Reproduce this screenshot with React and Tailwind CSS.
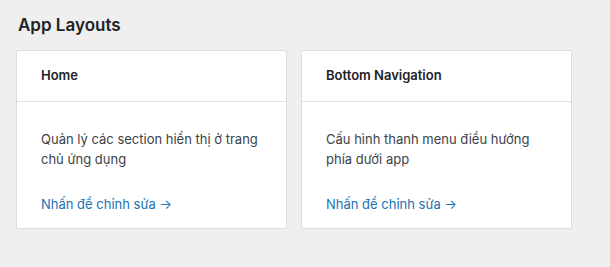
const cards = [
  {
    title: 'Home',
    desc: 'Quản lý các section hiển thị ở trang chủ ứng dụng',
  },
  {
    title: 'Bottom Navigation',
    desc: 'Cấu hình thanh menu điều hướng phía dưới app',
  },
];

const App = () => {
  return (
    <div
      className="bg-[#efefef] min-h-[267px] w-[610px] pl-4 pr-[38px] pt-[13px]"
      style={{ fontFamily: 'Inter, "Noto Sans", sans-serif' }}
    >
      <h1 className="text-[17px] leading-[24px] font-semibold text-[#1d2327] pl-[2px] mb-[13px]">
        App Layouts
      </h1>
      <div className="grid grid-cols-2 gap-[14px]">
        {cards.map((c) => (
          <div key={c.title} className="bg-white border border-[#dcdcde] rounded-[2px]">
            <div className="px-6 h-[51px] flex items-center border-b border-[#e2e2e4]">
              <h2 className="text-[13px] font-semibold text-[#1d2327]">{c.title}</h2>
            </div>
            <div className="px-6 pt-[28px] pb-[14px]">
              <p className="text-[13px] leading-[19.5px] text-[#3c434a]">{c.desc}</p>
              <a href="#" className="block mt-[25px] text-[13px] leading-[20px] text-[#2271b1]">
                Nhấn để chỉnh sửa →
              </a>
            </div>
          </div>
        ))}
      </div>
    </div>
  );
};

export default App;
